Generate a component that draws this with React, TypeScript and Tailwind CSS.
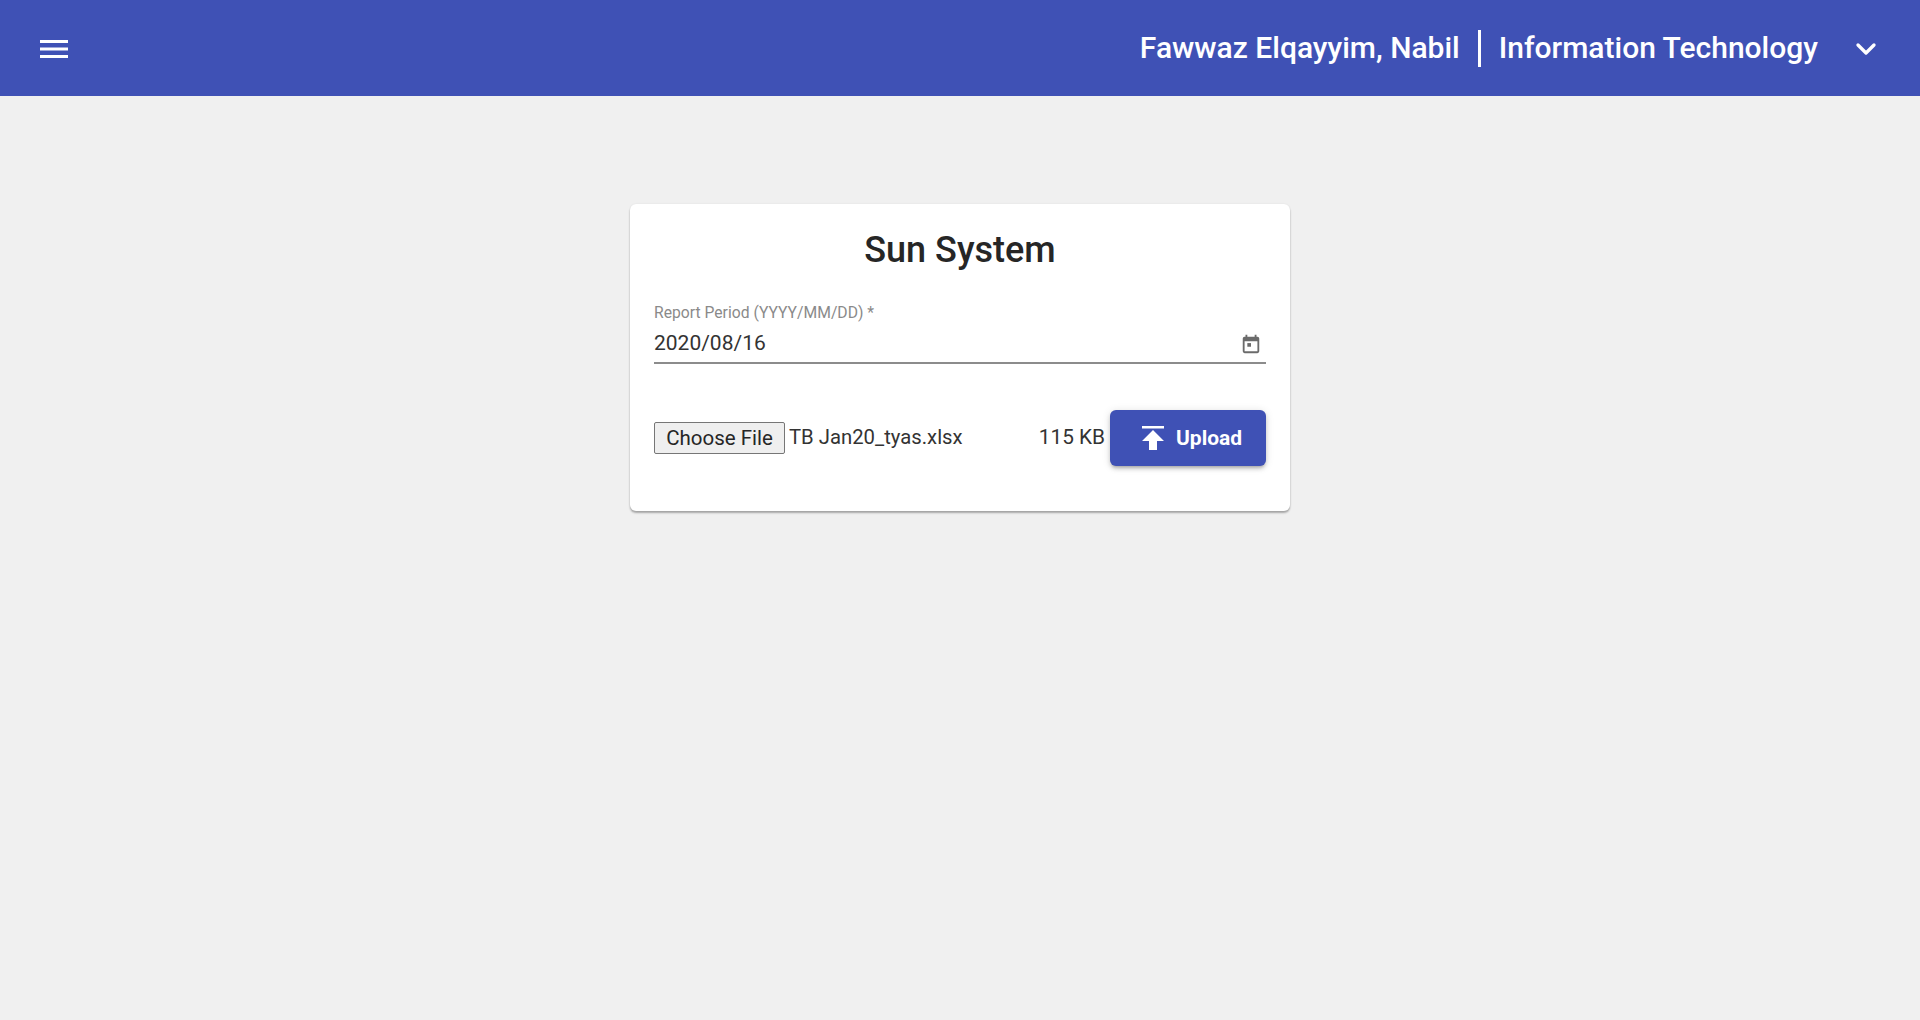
import { ChevronDown } from "lucide-react";

const roboto = "font-['Roboto',sans-serif]";

export default function App() {
  return (
    <div className={`${roboto} min-h-[1020px] bg-[#f0f0f0]`}>
      {/* App bar */}
      <header className="flex h-24 items-center justify-between bg-[#3f51b5] pl-10 pr-[38px] text-white">
        <svg viewBox="0 0 28 18" className="mt-0.5 h-[18px] w-7 fill-white" aria-label="Menu">
          <path d="M0 0h28v3H0zM0 7.500h28v3H0zM0 15h28v3H0z" />
        </svg>
        <div className="flex items-center">
          <span className="-mt-0.5 text-[30px] font-medium">Fawwaz Elqayyim, Nabil</span>
          <div className="mx-[18px] h-[37px] w-[3px] bg-white" />
          <span className="-mt-0.5 text-[30px] font-medium">Information Technology</span>
          <ChevronDown size={32} strokeWidth={2.5} className="ml-8 mt-0.5" />
        </div>
      </header>

      {/* Upload card */}
      <main className="flex justify-center pt-[108px]">
        <div className="h-[307px] w-[660px] rounded-md bg-white px-6 pt-[25px] shadow-[0_2px_2px_rgba(0,0,0,0.3),0_0_2px_rgba(0,0,0,0.08)]">
          <h1 className="text-center text-[36px] leading-[42px] font-medium text-[#262626]">Sun System</h1>

          <div className="mt-[34px] border-b-2 border-[#8c8c8c] pb-1">
            <label className="block text-[15.700px] leading-4 text-[#8a8a8a]">Report Period (YYYY/MM/DD) *</label>
            <div className="mt-[9px] flex h-7 items-center justify-between pr-1">
              <span className="text-[21px] text-[#333333]">2020/08/16</span>
              <svg viewBox="0 0 24 24" className="h-[22px] w-[22px] fill-[#6b6b6b]">
                <path d="M19 4h-1V2h-2v2H8V2H6v2H5a2 2 0 0 0-2 2v14a2 2 0 0 0 2 2h14a2 2 0 0 0 2-2V6a2 2 0 0 0-2-2zm0 16H5V9h14v11z" />
                <path d="M8 11h4v4H8z" />
              </svg>
            </div>
          </div>

          <div className="mt-[46px] flex items-center justify-between">
            <div className="flex items-center">
              <button className="h-8 w-[131px] rounded-[2px] border border-[#767676] bg-[#efefef] pb-0.5 text-[20.500px] text-[#262626]">Choose File</button>
              <span className="ml-1 -mt-0.5 text-[20.300px] text-[#333333]">TB Jan20_tyas.xlsx</span>
            </div>
            <div className="flex items-center">
              <span className="mr-[5px] text-[20.800px] text-[#333333]">115 KB</span>
              <button className="flex h-14 w-[156px] items-center gap-3 rounded-md bg-[#3f51b5] pl-8 text-[21px] font-bold text-white shadow-[0_3px_3px_-2px_rgba(0,0,0,0.2),0_3px_4px_rgba(0,0,0,0.14),0_1px_8px_rgba(0,0,0,0.12)]">
                <svg viewBox="0 0 22 24" className="h-6 w-[22px] fill-white">
                  <path d="M0 0h22v2.500H0zM11 4l11 11h-7v9H7v-9H0z" />
                </svg>
                <span className="mt-0.5">Upload</span>
              </button>
            </div>
          </div>
        </div>
      </main>
    </div>
  );
}
